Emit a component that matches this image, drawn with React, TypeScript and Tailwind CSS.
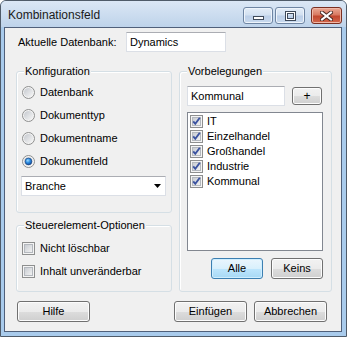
import React from "react";

function Radio({ checked }: { checked?: boolean }) {
  return (
    <svg width="13" height="13" viewBox="0 0 13 13" className="shrink-0">
      <defs>
        <linearGradient id="rbg" x1="0" y1="0" x2="1" y2="1">
          <stop offset="0" stopColor="#c4c8ce" />
          <stop offset="1" stopColor="#f7f7f7" />
        </linearGradient>
        <radialGradient id="rdot" cx="0.4" cy="0.35" r="0.75">
          <stop offset="0" stopColor="#9fdcff" />
          <stop offset="0.45" stopColor="#2a8ae0" />
          <stop offset="1" stopColor="#0d3a86" />
        </radialGradient>
      </defs>
      <circle cx="6.5" cy="6.5" r="6" fill="#f4f4f4" stroke="#8e8f8f" />
      <circle cx="6.5" cy="6.5" r="4.6" fill="url(#rbg)" />
      {checked && <circle cx="6.5" cy="6.5" r="3.4" fill="url(#rdot)" stroke="#183f7a" strokeWidth="0.6" />}
    </svg>
  );
}

function Check({ checked }: { checked?: boolean }) {
  return (
    <svg width="13" height="13" viewBox="0 0 13 13" className="shrink-0">
      <defs>
        <linearGradient id="cbg" x1="0" y1="0" x2="1" y2="1">
          <stop offset="0" stopColor="#c6cad0" />
          <stop offset="1" stopColor="#f4f4f4" />
        </linearGradient>
      </defs>
      <rect x="0.5" y="0.5" width="12" height="12" fill="#f4f4f4" stroke="#8e8f8f" />
      <rect x="2.5" y="2.5" width="8" height="8" fill="url(#cbg)" stroke="#b4b8be" />
      {checked && (
        <path d="M3.2 6.3 L5.3 8.8 L9.8 2.8" stroke="#3b53a0" strokeWidth="1.9" fill="none" strokeLinejoin="miter" />
      )}
    </svg>
  );
}

function Btn({ children, className = "", def = false }: { children: React.ReactNode; className?: string; def?: boolean }) {
  return (
    <div
      className={
        "flex items-center justify-center rounded-[3px] border text-[11px] text-black " +
        (def
          ? "border-[#3c7fb1] bg-[linear-gradient(#eaf6fd_0%,#d9f0fc_50%,#bee6fd_50%,#a7d9f5_100%)] shadow-[inset_0_0_0_1px_#cfeeff] "
          : "border-[#707070] bg-[linear-gradient(#f2f2f2_0%,#ebebeb_50%,#dddddd_50%,#cfcfcf_100%)] shadow-[inset_0_0_0_1px_#fcfcfc] ") +
        className
      }
    >
      {children}
    </div>
  );
}

function Group({ title, className = "", children }: { title: string; className?: string; children: React.ReactNode }) {
  return (
    <div className={"relative rounded-[3px] border border-[#d5dfe5] shadow-[inset_1px_1px_0_#fff] " + className}>
      <div className="absolute left-[7px] top-[-8px] bg-[#f0f0f0] px-[1px] text-[11px] leading-[14px]">{title}</div>
      {children}
    </div>
  );
}

function CaptionBtn({ kind }: { kind: "min" | "max" | "close" }) {
  if (kind === "close") {
    return (
      <div className="flex h-[17px] w-[31px] items-center justify-center rounded-[3px] border border-[#7a2f22] bg-[linear-gradient(#eaa995_0%,#d97a62_45%,#c2482f_55%,#d2684e_100%)] shadow-[inset_0_0_0_1px_#f0b8a8]">
        <svg width="13" height="10" viewBox="0 0 13 10">
          <path d="M2 1.5 L11 8.5 M11 1.5 L2 8.5" stroke="#4a2a24" strokeWidth="4" strokeLinecap="square" />
          <path d="M2 1.5 L11 8.5 M11 1.5 L2 8.5" stroke="#ffffff" strokeWidth="2" strokeLinecap="square" />
        </svg>
      </div>
    );
  }
  return (
    <div className="flex h-[17px] w-[30px] items-center justify-center rounded-[3px] border border-[#6e85a3] bg-[linear-gradient(#e4edf8_0%,#d3e1f1_45%,#bccfe8_55%,#c9daee_100%)] shadow-[inset_0_0_0_1px_#eef4fb]">
      {kind === "min" ? (
        <svg width="11" height="10" viewBox="0 0 11 10">
          <rect x="0.5" y="5.5" width="10" height="3" fill="#fff" stroke="#3f4a5a" />
        </svg>
      ) : (
        <svg width="11" height="10" viewBox="0 0 11 10">
          <rect x="1.5" y="1.5" width="8" height="7" fill="none" stroke="#3f4a5a" strokeWidth="3" />
          <rect x="1.5" y="1.5" width="8" height="7" fill="none" stroke="#fff" strokeWidth="1" />
        </svg>
      )}
    </div>
  );
}

const items = ["IT", "Einzelhandel", "Großhandel", "Industrie", "Kommunal"];

export default function App() {
  return (
    <div className="h-[337px] w-[347px] font-['Liberation_Sans',Arial,sans-serif] text-black">
      <div className="flex h-full w-full flex-col rounded-t-[6px] border border-[#4f5b69] bg-[#a9cbec]">
        {/* title bar */}
        <div className="flex h-[26px] shrink-0 items-start rounded-t-[5px] bg-[linear-gradient(#dbe7f5,#bed3ea)]">
          <div className="ml-[7px] mt-[7px] text-[12px] leading-[15px] text-[#1a1a1a]">Kombinationsfeld</div>
          <div className="ml-auto mr-[4px] mt-[6px] flex gap-[2px]">
            <CaptionBtn kind="min" />
            <CaptionBtn kind="max" />
            <div className="w-[2px]" />
            <CaptionBtn kind="close" />
          </div>
        </div>
        {/* client area */}
        <div className="mb-[4px] ml-[3px] mr-[4px] flex flex-1 flex-col border border-[#50607a] bg-[#f0f0f0] pl-[11px] pt-[4px] text-[11px]">
          <div className="flex h-[20px] items-center">
            <div className="w-[110px] pl-[2px]">Aktuelle Datenbank:</div>
            <div className="flex h-[20px] w-[100px] items-center border border-[#dbdfe6] border-t-[#abadb3] bg-white pl-[3px]">Dynamics</div>
          </div>

          <div className="mt-[19px] flex gap-[7px]">
            <div className="flex w-[156px] flex-col gap-[12px]">
              <Group title="Konfiguration" className="h-[142px]">
                <div className="flex flex-col gap-[7px] pl-[5px] pt-[12px]">
                  {["Datenbank", "Dokumenttyp", "Dokumentname", "Dokumentfeld"].map((t, i) => (
                    <div key={t} className="flex h-[16px] items-center gap-[5px]">
                      <Radio checked={i === 3} />
                      <span>{t}</span>
                    </div>
                  ))}
                </div>
                <div className="ml-[4px] mt-[7px] flex h-[20px] w-[145px] items-center justify-between border border-[#dbdfe6] border-t-[#abadb3] bg-white pl-[3px] pr-[4px]">
                  <span>Branche</span>
                  <svg width="7" height="4" viewBox="0 0 7 4">
                    <path d="M0 0 H7 L3.5 4 Z" fill="#000" />
                  </svg>
                </div>
              </Group>
              <Group title="Steuerelement-Optionen" className="h-[67px]">
                <div className="flex flex-col gap-[7px] pl-[5px] pt-[14px]">
                  {["Nicht löschbar", "Inhalt unveränderbar"].map((t) => (
                    <div key={t} className="flex h-[16px] items-center gap-[5px]">
                      <Check />
                      <span>{t}</span>
                    </div>
                  ))}
                </div>
              </Group>
            </div>

            <Group title="Vorbelegungen" className="h-[221px] w-[153px]">
              <div className="flex flex-col pl-[7px] pt-[14px]">
                <div className="flex items-center">
                  <div className="flex h-[20px] w-[98px] items-center border border-[#dbdfe6] border-t-[#abadb3] bg-white pl-[3px]">Kommunal</div>
                  <Btn className="ml-[7px] h-[18px] w-[30px] text-[12px]">+</Btn>
                </div>
                <div className="mt-[6px] h-[139px] w-[136px] border border-[#828790] bg-white pl-[2px] pt-[1px]">
                  {items.map((t) => (
                    <div key={t} className="flex h-[15px] items-center gap-[4px]">
                      <Check checked />
                      <span>{t}</span>
                    </div>
                  ))}
                </div>
                <div className="mt-[7px] flex w-[136px] justify-end gap-[8px]">
                  <Btn def className="h-[21px] w-[52px]">Alle</Btn>
                  <Btn className="h-[21px] w-[52px]">Keins</Btn>
                </div>
              </div>
            </Group>
          </div>

          <div className="mt-[9px] flex">
            <Btn className="ml-[1px] h-[21px] w-[73px]">Hilfe</Btn>
            <Btn className="ml-[84px] h-[21px] w-[73px]">Einfügen</Btn>
            <Btn className="ml-[7px] h-[21px] w-[73px]">Abbrechen</Btn>
          </div>
        </div>
      </div>
    </div>
  );
}
